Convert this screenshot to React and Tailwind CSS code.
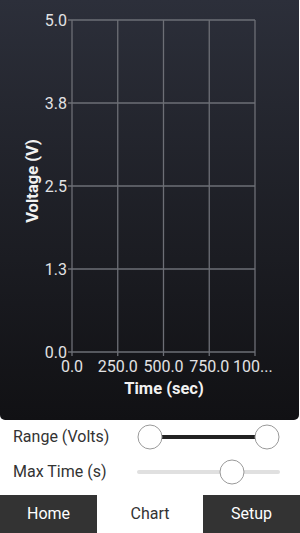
import { useState } from 'react';

const xs = [72, 117.75, 163.5, 209.25, 255];
const ys = [20, 103, 186, 269, 352];
const yLabels = ['5.0', '3.8', '2.5', '1.3', '0.0'];
const xLabels = ['0.0', '250.0', '500.0', '750.0', '100...'];

function Chart() {
  return (
    <svg width="300" height="420" viewBox="0 0 300 420" className="block">
      {xs.map((x) => (
        <line key={'v' + x} x1={x} y1={ys[0]} x2={x} y2={356} stroke="#6d6f76" strokeWidth="1.3" />
      ))}
      {ys.map((y) => (
        <line key={'h' + y} x1={68} y1={y} x2={xs[4]} y2={y} stroke="#6d6f76" strokeWidth="1.3" />
      ))}
      {ys.map((y, i) => (
        <text key={'yl' + y} x={67} y={y + 6} textAnchor="end" fill="#e2e2e4" fontSize="16">
          {yLabels[i]}
        </text>
      ))}
      {xs.map((x, i) => (
        <text key={'xl' + x} x={i === 4 ? 233 : x} y={372} textAnchor={i === 4 ? 'start' : 'middle'} fill="#e2e2e4" fontSize="16">
          {xLabels[i]}
        </text>
      ))}
      <text x={164} y={394} textAnchor="middle" fill="#f2f2f2" fontSize="16.5" fontWeight="bold">
        Time (sec)
      </text>
      <text x={38} y={181} textAnchor="middle" fill="#f2f2f2" fontSize="16.5" fontWeight="bold" transform="rotate(-90 38 181)">
        Voltage (V)
      </text>
    </svg>
  );
}

function Thumb({ left }) {
  return (
    <div
      className="absolute top-1/2 h-[25px] w-[25px] -translate-x-1/2 -translate-y-1/2 rounded-full border border-[#9a9a9a] bg-white"
      style={{ left }}
    />
  );
}

export default function App() {
  const [tab] = useState('Chart');
  const tabs = [
    ['Home', 'w-[97px]'],
    ['Chart', 'w-[106px]'],
    ['Setup', 'w-[97px]'],
  ];
  return (
    <div className="flex h-[533px] w-[300px] flex-col bg-white font-['Roboto',sans-serif]">
      <div className="h-[420px] w-[299px] rounded-b-[5px] bg-gradient-to-b from-[#2c2f3a] to-[#111114]">
        <Chart />
      </div>
      <div className="flex h-[34px] items-center">
        <span className="w-[137px] pl-[13px] text-[16px] text-[#333]">Range (Volts)</span>
        <div className="relative h-full flex-1">
          <div className="absolute top-1/2 left-[13px] h-[4px] w-[117px] -translate-y-1/2 bg-[#222]" />
          <Thumb left="13px" />
          <Thumb left="130px" />
        </div>
      </div>
      <div className="flex h-[36px] items-center">
        <span className="w-[137px] pl-[13px] text-[16px] text-[#333]">Max Time (s)</span>
        <div className="relative h-full w-[143px]">
          <div className="absolute top-1/2 left-0 h-[4px] w-full -translate-y-1/2 rounded-full bg-[#e0e0e0]" />
          <Thumb left="95px" />
        </div>
      </div>
      <div className="mt-[5px] flex h-[38px]">
        {tabs.map(([t, w]) => (
          <div
            key={t}
            className={
              'flex items-center justify-center text-[16px] ' +
              w +
              (t === tab ? ' bg-white text-[#333]' : ' bg-[#333] text-white')
            }
          >
            {t}
          </div>
        ))}
      </div>
    </div>
  );
}
